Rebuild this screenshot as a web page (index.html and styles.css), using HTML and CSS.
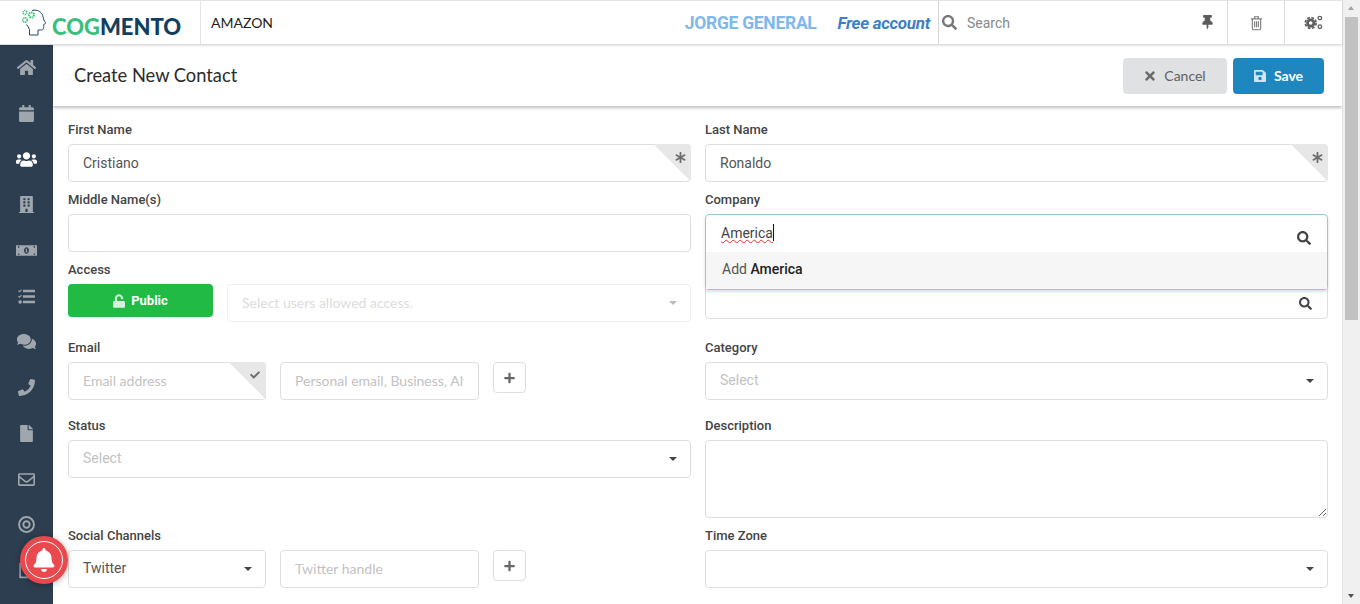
FILE: index.html
```html
<!DOCTYPE html>
<html lang="en">
<head>
  <meta charset="UTF-8" />
  <meta name="viewport" content="width=device-width, initial-scale=1.0" />
  <title>Create New Contact</title>
  <link rel="stylesheet" href="styles.css">
</head>
<body>
  <svg class="defs" width="0" height="0">
    <symbol id="i-search" viewBox="0 0 512 512"><path d="M505 442.7L405.3 343c-4.5-4.5-10.6-7-17-7H372c27.6-35.3 44-79.7 44-128C416 93.1 322.9 0 208 0S0 93.1 0 208s93.1 208 208 208c48.3 0 92.7-16.4 128-44v16.3c0 6.4 2.5 12.5 7 17l99.7 99.7c9.4 9.4 24.6 9.4 33.9 0l28.3-28.3c9.4-9.4 9.4-24.6.1-34zM208 336c-70.7 0-128-57.2-128-128 0-70.7 57.2-128 128-128 70.7 0 128 57.2 128 128 0 70.7-57.2 128-128 128z"/></symbol>
    <symbol id="i-asterisk" viewBox="0 0 512 512"><path d="M478.21 334.093L336 256l142.21-78.093c11.795-6.477 15.961-21.384 9.232-33.037l-19.48-33.741c-6.728-11.653-21.72-15.499-33.227-8.523L296 186.718l3.475-162.204C299.763 11.061 288.937 0 275.48 0h-38.96c-13.456 0-24.283 11.061-23.994 24.514L216 186.718 77.265 102.607c-11.506-6.976-26.499-3.13-33.227 8.523l-19.48 33.741c-6.728 11.653-2.562 26.56 9.233 33.037L176 256 33.79 334.093c-11.795 6.477-15.961 21.384-9.232 33.037l19.48 33.741c6.728 11.653 21.721 15.499 33.227 8.523L216 325.282l-3.475 162.204C212.237 500.939 223.064 512 236.52 512h38.961c13.456 0 24.283-11.061 23.995-24.514L296 325.282l138.735 84.111c11.506 6.976 26.499 3.13 33.227-8.523l19.48-33.741c6.728-11.653 2.563-26.559-9.232-33.036z"/></symbol>
    <symbol id="i-plus" viewBox="0 0 448 512"><path d="M416 208H272V64c0-17.67-14.33-32-32-32h-32c-17.67 0-32 14.33-32 32v144H32c-17.67 0-32 14.33-32 32v32c0 17.67 14.33 32 32 32h144v144c0 17.67 14.33 32 32 32h32c17.67 0 32-14.33 32-32V304h144c17.67 0 32-14.33 32-32v-32c0-17.67-14.33-32-32-32z"/></symbol>
  </svg>

  <div class="window">
    <div class="page">
      <header class="topbar">
        <div class="logo">
          <svg class="logo-head" viewBox="0 0 26 27" fill="none">
            <path d="M11 1.500c5.500-1.500 10.500 1.500 11.200 7 .3 2 .8 3 2.300 5.200.4 1-1 1.300-1.800 1.600 0 3 .5 6-3 5.700h-2.700v5H8.500v-5.500C8 18.500 6.500 17 5.500 15.500" stroke="#1b4a68" stroke-width="1"/>
            <circle cx="4" cy="3.500" r="2" stroke="#3cbf7c" stroke-width="1.400" stroke-dasharray="1.300 .6"/>
            <circle cx="10.500" cy="6" r="2.500" stroke="#3cbf7c" stroke-width="2" stroke-dasharray="1.500 .7"/>
            <circle cx="4" cy="11" r="2.200" stroke="#3cbf7c" stroke-width="1.500" stroke-dasharray="1.300 .6"/>
          </svg>
          <span class="logo-text"><span class="logo-cog">COG</span>MENTO</span>
        </div>
        <div class="account-name">AMAZON</div>
        <div class="user-name">JORGE GENERAL</div>
        <div class="plan">Free account</div>
        <div class="top-search">
          <svg class="icon top-search-icon"><use href="#i-search"/></svg>
          <span class="top-search-text">Search</span>
          <svg class="pin" viewBox="0 0 384 512"><path d="M298.028 214.267L285.793 96H328c13.255 0 24-10.745 24-24V24c0-13.255-10.745-24-24-24H56C42.745 0 32 10.745 32 24v48c0 13.255 10.745 24 24 24h42.207L85.972 214.267C37.465 236.82 0 277.261 0 328c0 13.255 10.745 24 24 24h136v104.007c0 1.242.289 2.467.845 3.578l24 48c2.941 5.882 11.364 5.893 14.311 0l24-48a8.008 8.008 0 0 0 .845-3.578V352h136c13.255 0 24-10.745 24-24-.001-51.183-37.983-91.42-85.973-113.733z"/></svg>
        </div>
        <div class="top-btn trash-btn">
          <svg class="trash" viewBox="0 0 14 16" fill="none" stroke="#7d7d7d" stroke-width="1.200">
            <path d="M1 3.500h12M5 3.300V1.300h4v2M2.500 3.500v10.200c0 .8.500 1.500 1.300 1.500h6.400c.8 0 1.300-.7 1.300-1.500V3.500M5 6v6.500M7 6v6.500M9 6v6.500"/>
          </svg>
        </div>
        <div class="top-btn cogs-btn">
          <svg class="cogs" viewBox="0 0 20 16" fill="none" stroke="#616161">
            <circle cx="7" cy="8.500" r="3.400" stroke-width="3"/>
            <circle cx="7" cy="8.500" r="5.800" stroke-width="1.800" stroke-dasharray="3 1.560"/>
            <circle cx="16.800" cy="3.300" r="1.900" stroke-width="1.400"/>
            <circle cx="16.800" cy="12.500" r="1.900" stroke-width="1.400"/>
          </svg>
        </div>
      </header>

      <div class="main">
        <nav class="sidebar">
          <a class="nav-item"><svg viewBox="0 0 576 512" class="nav-icon"><path d="M280.37 148.26L96 300.11V464a16 16 0 0 0 16 16l112.06-.29a16 16 0 0 0 15.92-16V368a16 16 0 0 1 16-16h64a16 16 0 0 1 16 16v95.64a16 16 0 0 0 16 16.05L464 480a16 16 0 0 0 16-16V300L295.67 148.26a12.19 12.19 0 0 0-15.3 0zM571.6 251.47L488 182.56V44.05a12 12 0 0 0-12-12h-56a12 12 0 0 0-12 12v72.61L318.47 43a48 48 0 0 0-61 0L4.34 251.47a12 12 0 0 0-1.6 16.9l25.5 31A12 12 0 0 0 45.15 301l235.22-193.74a12.19 12.19 0 0 1 15.3 0L530.9 301a12 12 0 0 0 16.9-1.6l25.5-31a12 12 0 0 0-1.7-16.93z"/></svg></a>
          <a class="nav-item"><svg viewBox="0 0 448 512" class="nav-icon"><path d="M12 192h424c6.600 0 12 5.400 12 12v260c0 26.500-21.500 48-48 48H48c-26.500 0-48-21.500-48-48V204c0-6.600 5.400-12 12-12zm436-44v-36c0-26.500-21.500-48-48-48h-48V12c0-6.600-5.400-12-12-12h-40c-6.600 0-12 5.400-12 12v52H160V12c0-6.600-5.400-12-12-12h-40c-6.600 0-12 5.400-12 12v52H48C21.500 64 0 85.500 0 112v36c0 6.600 5.400 12 12 12h424c6.600 0 12-5.400 12-12z"/></svg></a>
          <a class="nav-item active"><svg viewBox="0 0 640 512" class="nav-icon"><path d="M96 224c35.300 0 64-28.700 64-64s-28.700-64-64-64-64 28.700-64 64 28.700 64 64 64zm448 0c35.300 0 64-28.700 64-64s-28.700-64-64-64-64 28.700-64 64 28.700 64 64 64zm32 32h-64c-17.600 0-33.500 7.100-45.100 18.600 40.300 22.100 68.900 62 75.100 109.400h66c17.700 0 32-14.300 32-32v-32c0-35.300-28.700-64-64-64zm-256 0c61.900 0 112-50.100 112-112S381.900 32 320 32 208 82.100 208 144s50.100 112 112 112zm76.800 32h-8.300c-20.800 10-43.900 16-68.500 16s-47.600-6-68.500-16h-8.300C179.600 288 128 339.600 128 403.200V432c0 26.500 21.500 48 48 48h288c26.500 0 48-21.500 48-48v-28.800c0-63.600-51.600-115.200-115.200-115.200zm-223.700-13.400C161.500 263.100 145.600 256 128 256H64c-35.300 0-64 28.700-64 64v32c0 17.700 14.300 32 32 32h65.900c6.300-47.400 34.900-87.300 75.200-109.400z"/></svg></a>
          <a class="nav-item"><svg viewBox="0 0 448 512" class="nav-icon"><path d="M436 480h-20V24c0-13.300-10.700-24-24-24H56C42.700 0 32 10.700 32 24v456H12c-6.600 0-12 5.400-12 12v20h448v-20c0-6.600-5.400-12-12-12zM128 76c0-6.600 5.400-12 12-12h40c6.600 0 12 5.400 12 12v40c0 6.600-5.400 12-12 12h-40c-6.600 0-12-5.400-12-12V76zm0 96c0-6.600 5.400-12 12-12h40c6.600 0 12 5.400 12 12v40c0 6.600-5.400 12-12 12h-40c-6.600 0-12-5.400-12-12v-40zm52 148h-40c-6.600 0-12-5.400-12-12v-40c0-6.600 5.400-12 12-12h40c6.600 0 12 5.400 12 12v40c0 6.600-5.400 12-12 12zm76 160h-64v-84c0-6.600 5.400-12 12-12h40c6.600 0 12 5.400 12 12v84zm64-172c0 6.600-5.400 12-12 12h-40c-6.600 0-12-5.400-12-12v-40c0-6.600 5.400-12 12-12h40c6.600 0 12 5.400 12 12v40zm0-96c0 6.600-5.400 12-12 12h-40c-6.600 0-12-5.400-12-12v-40c0-6.600 5.400-12 12-12h40c6.600 0 12 5.400 12 12v40zm0-96c0 6.600-5.400 12-12 12h-40c-6.600 0-12-5.400-12-12V76c0-6.600 5.400-12 12-12h40c6.600 0 12 5.400 12 12v40z"/></svg></a>
          <a class="nav-item"><svg viewBox="0 0 640 400" class="nav-icon"><path fill-rule="evenodd" d="M0 40h640v320H0zM60 70v50a50 50 0 0 0 50-50zm470 0a50 50 0 0 0 50 50V70zM60 280v50h50a50 50 0 0 0-50-50zm520 0a50 50 0 0 0-50 50h50zM320 100c-45 0-75 45-75 100s30 100 75 100 75-45 75-100-30-100-75-100z"/><path d="M300 150h35v80h20v25h-70v-25h20v-50h-15z"/></svg></a>
          <a class="nav-item"><svg viewBox="0 0 512 512" class="nav-icon"><path d="M160 50h340c6.600 0 12 5.400 12 12v56c0 6.600-5.400 12-12 12H160c-6.600 0-12-5.400-12-12V62c0-6.600 5.400-12 12-12zm0 166h340c6.600 0 12 5.400 12 12v56c0 6.600-5.400 12-12 12H160c-6.600 0-12-5.400-12-12v-56c0-6.600 5.400-12 12-12zm0 166h340c6.600 0 12 5.400 12 12v56c0 6.600-5.400 12-12 12H160c-6.600 0-12-5.400-12-12v-56c0-6.600 5.400-12 12-12zM64 368a54 54 0 1 0 0 108 54 54 0 0 0 0-108zM0 90l24-24 22 22 50-52 24 24-74 78zm0 166l24-24 22 22 50-52 24 24-74 78z"/></svg></a>
          <a class="nav-item"><svg viewBox="0 0 576 512" class="nav-icon"><path d="M416 192c0-88.400-93.100-160-208-160S0 103.600 0 192c0 34.300 14.100 65.900 38 92-13.400 30.200-35.500 54.200-35.800 54.500-2.200 2.300-2.800 5.700-1.500 8.700S4.800 352 8 352c36.600 0 66.900-12.300 88.700-25 32.200 15.700 70.300 25 111.300 25 114.900 0 208-71.600 208-160zm122 220c23.900-26 38-57.700 38-92 0-66.900-53.500-124.200-129.300-148.100.9 6.600 1.300 13.300 1.300 20.100 0 105.900-107.700 192-240 192-10.800 0-21.300-.8-31.700-1.900C207.800 439.600 281.800 480 368 480c41 0 79.100-9.200 111.300-25 21.800 12.700 52.100 25 88.700 25 3.200 0 6.100-1.900 7.300-4.800 1.300-2.900.7-6.300-1.500-8.700-.3-.3-22.400-24.200-35.800-54.500z"/></svg></a>
          <a class="nav-item"><svg viewBox="0 0 512 512" class="nav-icon"><path d="M493.400 24.600l-104-24c-11.300-2.600-22.900 3.300-27.500 13.900l-48 112c-4.200 9.800-1.400 21.300 6.900 28l60.600 49.600c-36 76.700-98.900 140.500-177.200 177.200l-49.600-60.600c-6.800-8.300-18.200-11.100-28-6.900l-112 48C3.900 366.500-2 378.100.6 389.400l24 104C27.100 504.200 36.700 512 48 512c256.100 0 464-207.500 464-464 0-11.200-7.700-20.900-18.600-23.400z"/></svg></a>
          <a class="nav-item"><svg viewBox="0 0 384 512" class="nav-icon"><path d="M224 136V0H24C10.700 0 0 10.700 0 24v464c0 13.300 10.700 24 24 24h336c13.300 0 24-10.700 24-24V160H248c-13.200 0-24-10.800-24-24zm160-14.100v6.100H256V0h6.100c6.400 0 12.500 2.500 17 7l97.900 98c4.500 4.500 7 10.600 7 16.900z"/></svg></a>
          <a class="nav-item"><svg viewBox="0 0 512 512" class="nav-icon"><path d="M464 64H48C21.490 64 0 85.490 0 112v288c0 26.510 21.490 48 48 48h416c26.510 0 48-21.490 48-48V112c0-26.510-21.490-48-48-48zm0 48v40.805c-22.422 18.259-58.168 46.651-134.587 106.490-16.841 13.247-50.201 45.072-73.413 44.701-23.208.375-56.579-31.459-73.413-44.701C106.180 199.465 70.425 171.067 48 152.805V112h416zM48 400V214.398c22.914 18.251 55.409 43.862 104.938 82.646 21.857 17.205 60.134 55.186 103.062 54.955 42.717.231 80.509-37.199 103.053-54.947 49.528-38.783 82.032-64.401 104.947-82.653V400H48z"/></svg></a>
          <a class="nav-item"><svg viewBox="0 0 16 16" class="nav-icon nav-line"><circle cx="8" cy="8" r="7" stroke-width="1.800"/><circle cx="8" cy="8" r="3" stroke-width="1.800"/></svg></a>
          <a class="nav-item"><svg viewBox="0 0 16 16" class="nav-icon nav-line"><path d="M2 1.500h12v13H2z" stroke-width="1.500"/></svg></a>
        </nav>

        <main class="content">
          <div class="titlebar">
            <h1 class="page-title">Create New Contact</h1>
            <div class="actions">
              <button class="btn btn-cancel">
                <svg class="btn-icon" viewBox="0 0 352 512"><path d="M242.720 256l100.070-100.070c12.280-12.280 12.280-32.190 0-44.480l-22.240-22.240c-12.280-12.280-32.190-12.280-44.480 0L176 189.280 75.930 89.210c-12.280-12.280-32.190-12.280-44.480 0L9.210 111.450c-12.280 12.280-12.280 32.190 0 44.480L109.280 256 9.210 356.070c-12.280 12.280-12.280 32.190 0 44.480l22.240 22.240c12.280 12.280 32.200 12.280 44.480 0L176 322.720l100.070 100.070c12.280 12.280 32.200 12.280 44.480 0l22.240-22.240c12.280-12.280 12.280-32.190 0-44.480L242.720 256z"/></svg>
                Cancel
              </button>
              <button class="btn btn-save">
                <svg class="btn-icon" viewBox="0 0 448 512"><path d="M433.941 129.941l-83.882-83.882A48 48 0 0 0 316.118 32H48C21.490 32 0 53.490 0 80v352c0 26.510 21.490 48 48 48h352c26.510 0 48-21.490 48-48V163.882a48 48 0 0 0-14.059-33.941zM224 416c-35.346 0-64-28.654-64-64 0-35.346 28.654-64 64-64s64 28.654 64 64c0 35.346-28.654 64-64 64zm96-304.520V212c0 6.627-5.373 12-12 12H76c-6.627 0-12-5.373-12-12V108c0-6.627 5.373-12 12-12h228.520c3.183 0 6.235 1.264 8.485 3.515l3.480 3.480A11.996 11.996 0 0 1 320 111.480z"/></svg>
                Save
              </button>
            </div>
          </div>

          <form class="form">
            <div class="field">
              <label>First Name</label>
              <div class="control">
                <input class="input" type="text" value="Cristiano" />
                <span class="corner"><svg class="corner-icon"><use href="#i-asterisk"/></svg></span>
              </div>
            </div>
            <div class="field">
              <label>Last Name</label>
              <div class="control">
                <input class="input" type="text" value="Ronaldo" />
                <span class="corner"><svg class="corner-icon"><use href="#i-asterisk"/></svg></span>
              </div>
            </div>

            <div class="field">
              <label>Middle Name(s)</label>
              <input class="input" type="text" />
            </div>
            <div class="field field-company">
              <label>Company</label>
              <div class="control">
                <div class="company-open">
                  <div class="company-typed">
                    <span class="typed"><span class="misspelt">America</span><span class="caret"></span></span>
                    <svg class="icon company-search"><use href="#i-search"/></svg>
                  </div>
                  <div class="company-option">Add <b>America</b></div>
                </div>
              </div>
            </div>

            <div class="field field-wide">
              <label>Access</label>
              <div class="access-row">
                <button type="button" class="btn-public">
                  <svg class="btn-icon" viewBox="0 0 448 512"><path d="M400 256H152V152.900c0-39.600 31.700-72.500 71.300-72.900 40-.4 72.700 32.100 72.700 72v16c0 13.300 10.700 24 24 24h32c13.300 0 24-10.700 24-24v-16C376 68 307.500-.3 223.500 0 139.500.3 72 69.500 72 153.500V256H48c-26.500 0-48 21.500-48 48v160c0 26.500 21.500 48 48 48h352c26.500 0 48-21.500 48-48V304c0-26.500-21.500-48-48-48z"/></svg>
                  Public
                </button>
                <div class="select select-disabled">Select users allowed access.<i class="caret-down"></i></div>
              </div>
            </div>
            <div class="field field-wide">
              <div class="under-dropdown">
                <svg class="icon under-search"><use href="#i-search"/></svg>
              </div>
            </div>

            <div class="field field-wide">
              <label>Email</label>
              <div class="pair-row">
                <div class="control pair-main">
                  <input class="input" type="text" placeholder="Email address" />
                  <span class="corner"><svg class="corner-icon corner-check" viewBox="0 0 512 512"><path d="M173.898 439.404l-166.400-166.400c-9.997-9.997-9.997-26.206 0-36.204l36.203-36.204c9.997-9.998 26.207-9.998 36.204 0L192 312.690 432.095 72.596c9.997-9.997 26.207-9.997 36.204 0l36.203 36.204c9.997 9.997 9.997 26.206 0 36.204l-294.400 294.401c-9.998 9.997-26.207 9.997-36.204-.001z"/></svg></span>
                </div>
                <input class="input pair-second" type="text" placeholder="Personal email, Business, Alt..." />
                <button type="button" class="btn-add"><svg class="add-icon"><use href="#i-plus"/></svg></button>
              </div>
            </div>
            <div class="field field-wide">
              <label>Category</label>
              <div class="select select-empty">Select<i class="caret-down dark"></i></div>
            </div>

            <div class="field">
              <label>Status</label>
              <div class="select select-empty">Select<i class="caret-down dark"></i></div>
            </div>
            <div class="field">
              <label>Description</label>
              <textarea class="textarea"></textarea>
            </div>

            <div class="field">
              <label>Social Channels</label>
              <div class="pair-row">
                <div class="select select-value pair-main">Twitter<i class="caret-down dark"></i></div>
                <input class="input pair-second" type="text" placeholder="Twitter handle" />
                <button type="button" class="btn-add"><svg class="add-icon"><use href="#i-plus"/></svg></button>
              </div>
            </div>
            <div class="field">
              <label>Time Zone</label>
              <div class="select"><i class="caret-down dark"></i></div>
            </div>
          </form>
        </main>
      </div>
    </div>

    <div class="scrollbar">
      <span class="scroll-arrow"></span>
      <span class="scroll-thumb"></span>
      <span class="scroll-arrow-down"></span>
    </div>
  </div>

  <div class="bell">
    <span class="bell-ring">
      <svg class="bell-icon" viewBox="0 0 448 512"><path d="M224 512c35.320 0 63.970-28.650 63.970-64H160.030c0 35.350 28.650 64 63.970 64zm215.390-149.710c-19.320-20.760-55.470-51.990-55.470-154.290 0-77.700-54.480-139.900-127.940-155.160V32c0-17.670-14.320-32-31.980-32s-31.980 14.330-31.980 32v20.840C118.560 68.100 64.080 130.300 64.080 208c0 102.300-36.150 133.530-55.470 154.290-6 6.450-8.660 14.160-8.610 21.710.11 16.400 12.980 32 32.100 32h383.800c19.120 0 32-15.600 32.100-32 .05-7.550-2.610-15.270-8.610-21.710z"/></svg>
    </span>
  </div>
</body>
</html>
```

FILE: styles.css
```css
* {
  box-sizing: border-box;
}
html, body {
  margin: 0;
  height: 100%;
  overflow: hidden;
}
body {
  font-family: Roboto, "Liberation Sans", sans-serif;
  font-size: 14px;
  color: #333;
  background: #fff;
}
.defs {
  position: absolute;
}
.window {
  display: flex;
  height: 604px;
}
.page {
  flex: 1;
  min-width: 0;
  display: flex;
  flex-direction: column;
}

/* top bar */
.topbar {
  height: 45px;
  flex: none;
  display: flex;
  align-items: stretch;
  background: #fff;
  border-top: 1px solid #e4e4e4;
  border-bottom: 1px solid #ddd;
  position: relative;
  z-index: 3;
  box-shadow: 0 1px 2px rgba(0,0,0,0.12);
}
.logo {
  width: 201px;
  flex: none;
  display: flex;
  align-items: center;
  padding-left: 21px;
  border-right: 1px solid #e3e3e3;
}
.logo-head {
  width: 26px;
  height: 27px;
  flex: none;
}
.logo-text {
  font-family: Lato, sans-serif;
  font-weight: 900;
  font-size: 22px;
  color: #123f5e;
  margin-left: 5px;
  margin-top: 8px;
  letter-spacing: 0;
}
.logo-cog {
  color: #3cbf7c;
}
.account-name {
  font-family: Lato, sans-serif;
  font-size: 14px;
  color: #222;
  padding-left: 10px;
  display: flex;
  align-items: center;
  flex: 1;
}
.user-name {
  font-size: 17.5px;
  font-weight: 700;
  color: #7fb8ec;
  letter-spacing: -0.3px;
  display: flex;
  align-items: center;
  margin-right: 21px;
}
.plan {
  font-size: 17px;
  font-weight: 700;
  font-style: italic;
  color: #3f7fc4;
  letter-spacing: -0.3px;
  display: flex;
  align-items: center;
  margin-right: 8px;
}
.top-search {
  width: 289px;
  flex: none;
  display: flex;
  align-items: center;
  border-left: 1px solid #d6d6d6;
  padding-left: 3px;
}
.top-search-icon {
  width: 15px;
  height: 15px;
  fill: #777;
}
.top-search-text {
  margin-left: 10px;
  font-size: 14px;
  color: #888;
}
.pin {
  width: 11px;
  height: 14px;
  margin-left: auto;
  margin-right: 14px;
  fill: #5c5c5c;
  margin-top: -2px;
}
.top-btn {
  flex: none;
  display: flex;
  align-items: center;
  justify-content: center;
  border-left: 1px solid #dcdcdc;
}
.trash-btn {
  width: 57px;
}
.cogs-btn {
  width: 58px;
}
.trash {
  width: 13px;
  height: 16px;
}
.cogs {
  width: 19px;
  height: 15px;
}

/* sidebar */
.main {
  flex: 1;
  min-height: 0;
  display: flex;
}
.sidebar {
  width: 53px;
  flex: none;
  background: #2d3e50;
  display: flex;
  flex-direction: column;
}
.nav-item {
  height: 45.7px;
  flex: none;
  display: flex;
  align-items: center;
  justify-content: center;
}
.nav-icon {
  width: 21px;
  height: 17px;
  fill: #9fa6ae;
}
.nav-icon.nav-line {
  fill: none;
  stroke: #9fa6ae;
}
.nav-item.active .nav-icon {
  fill: #fff;
}

/* content */
.content {
  flex: 1;
  min-width: 0;
  overflow: hidden;
}
.titlebar {
  height: 61px;
  display: flex;
  align-items: center;
  justify-content: space-between;
  padding: 0 18px 0 21px;
  box-shadow: 0 2px 3px rgba(0,0,0,0.25);
  position: relative;
}
.page-title {
  margin: 0 0 2px;
  font-family: Lato, sans-serif;
  font-weight: 400;
  font-size: 18.3px;
  color: #2b2b2b;
}
.actions {
  display: flex;
  gap: 6px;
}
.btn {
  height: 36px;
  border: 0;
  border-radius: 4px;
  font-family: Lato, sans-serif;
  font-size: 14px;
  display: flex;
  align-items: center;
  justify-content: center;
  gap: 8px;
}
.btn-icon {
  width: 12px;
  height: 14px;
}
.btn-cancel {
  width: 104px;
  background: #e0e1e2;
  color: #5f5f5f;
}
.btn-cancel .btn-icon {
  fill: #6b6b6b;
}
.btn-save {
  width: 91px;
  background: #1f87c0;
  color: #fff;
  font-weight: 700;
}
.btn-save .btn-icon {
  fill: #cfe6f3;
}

/* form */
.form {
  display: grid;
  grid-template-columns: 623px 623px;
  column-gap: 14px;
  padding: 16px 15px 0;
}
.field {
  margin-bottom: 10px;
  min-width: 0;
}
.field-wide {
  margin-bottom: 18px;
}
label {
  display: block;
  height: 22px;
  line-height: 16px;
  font-size: 13px;
  font-weight: 500;
  color: #444;
}
.control {
  position: relative;
}
.input, .select, .textarea {
  display: block;
  width: 100%;
  height: 38px;
  border: 1px solid #dededf;
  border-radius: 4px;
  background: #fff;
  padding: 0 14px;
  font-family: Roboto, sans-serif;
  font-size: 14px;
  color: #555;
  outline: none;
}
.input::placeholder {
  font-family: Lato, sans-serif;
  color: #c2c2c2;
  opacity: 1;
}
.corner {
  position: absolute;
  top: 0;
  right: 0;
  width: 37px;
  height: 38px;
  border-top-right-radius: 4px;
  border-bottom-right-radius: 4px;
  background: linear-gradient(to top right, transparent 50%, #e7e7e7 50%);
}
.corner-icon {
  position: absolute;
  top: 8px;
  right: 5px;
  width: 11px;
  height: 11px;
  fill: #6e6e6e;
}
.corner-check {
  right: 6px;
  width: 10px;
  height: 10px;
  top: 8px;
}

/* company search, left open */
.field-company {
  z-index: 2;
  height: 60px;
}
.company-open {
  position: absolute;
  top: 0;
  left: 0;
  right: 0;
  height: 76px;
  border: 1px solid #96c8da;
  border-radius: 4px;
  background: #fff;
  box-shadow: 0 2px 3px rgba(34,36,38,0.15);
}
.company-typed {
  height: 37px;
  display: flex;
  align-items: center;
  justify-content: space-between;
  padding: 0 16px 2px 15px;
}
.typed {
  display: flex;
  align-items: center;
  color: #444;
}
.misspelt {
  text-decoration: underline wavy #e03030 1px;
  text-underline-offset: 1px;
  text-decoration-skip-ink: none;
}
.caret {
  width: 1px;
  height: 17px;
  background: #111;
}
.company-search {
  width: 14px;
  height: 14px;
  margin-top: 10px;
  fill: #444;
}
.company-option {
  height: 37px;
  background: #f6f6f6;
  padding: 0 16px;
  line-height: 35px;
  color: #555;
}
.company-option b {
  font-weight: 500;
  color: #222;
}
.under-dropdown {
  height: 57px;
  border: 1px solid #dededf;
  border-radius: 4px;
  display: flex;
  align-items: flex-end;
  justify-content: flex-end;
  padding: 0 15px 8px;
}
.under-search {
  width: 13px;
  height: 13px;
  fill: #444;
}

/* selects */
.select {
  position: relative;
  line-height: 35px;
}
.select-empty {
  color: #c2c2c2;
}
.select-disabled {
  font-family: Lato, sans-serif;
  color: #dcdcdc;
  border-color: #efefef;
}
.select-value {
  color: #555;
}
.caret-down {
  position: absolute;
  top: 16px;
  right: 13px;
  width: 0;
  height: 0;
  border-left: 4px solid transparent;
  border-right: 4px solid transparent;
  border-top: 4px solid #bbb;
}
.caret-down.dark {
  border-top-color: #444;
}
.access-row {
  display: flex;
  gap: 14px;
}
.btn-public {
  width: 145px;
  height: 33px;
  flex: none;
  border: 0;
  border-radius: 4px;
  background: #21ba45;
  color: #fff;
  font-family: Roboto, sans-serif;
  font-size: 13px;
  font-weight: 700;
  display: flex;
  align-items: center;
  justify-content: center;
  gap: 6px;
}
.btn-public .btn-icon {
  fill: #d4f1db;
}
.select-disabled {
  flex: 1;
}
.pair-row {
  display: flex;
  align-items: flex-start;
  gap: 14px;
}
.pair-main {
  width: 198px;
  flex: none;
}
.pair-second {
  width: 199px;
  flex: none;
}
.btn-add {
  width: 33px;
  height: 31px;
  flex: none;
  background: #fff;
  border: 1px solid #dededf;
  border-radius: 4px;
  padding: 0;
  display: flex;
  align-items: center;
  justify-content: center;
}
.add-icon {
  width: 11px;
  height: 12px;
  fill: #666;
}
.textarea {
  height: 78px;
  resize: vertical;
  padding: 10px 14px;
}

/* fake browser scrollbar */
.scrollbar {
  width: 18px;
  flex: none;
  background: #f0f0f0;
  border-left: 1px solid #e0e0e0;
  padding: 17px 2px 0;
  position: relative;
}
.scroll-arrow {
  position: absolute;
  top: 6px;
  left: 5px;
  border-left: 3.5px solid transparent;
  border-right: 3.5px solid transparent;
  border-bottom: 4px solid #a3a3a3;
}
.scroll-arrow-down {
  position: absolute;
  bottom: 6px;
  left: 5px;
  border-left: 3.5px solid transparent;
  border-right: 3.5px solid transparent;
  border-top: 4px solid #505050;
}
.scroll-thumb {
  display: block;
  height: 303px;
  background: #c1c1c1;
}

/* notification bell over the sidebar */
.bell {
  position: absolute;
  left: 20px;
  top: 536px;
  width: 48px;
  height: 48px;
  border-radius: 50%;
  background: #e8494f;
  box-shadow: 0 1px 6px rgba(0,0,0,0.3);
  z-index: 5;
  display: flex;
  align-items: center;
  justify-content: center;
}
.bell-ring {
  width: 38px;
  height: 38px;
  border: 1.5px solid #fff;
  border-radius: 50%;
  display: flex;
  align-items: center;
  justify-content: center;
}
.bell-icon {
  width: 22px;
  height: 24px;
  fill: #fff;
}
```
